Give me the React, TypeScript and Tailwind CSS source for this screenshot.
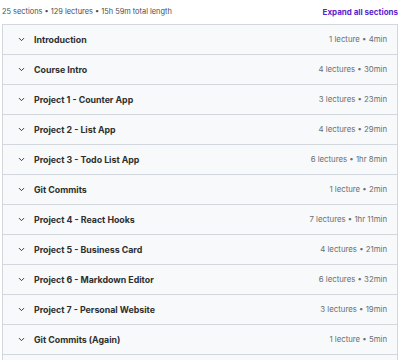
import { ChevronDown } from "lucide-react";

const sections = [
  { title: "Introduction", meta: "1 lecture • 4min" },
  { title: "Course Intro", meta: "4 lectures • 30min" },
  { title: "Project 1 - Counter App", meta: "3 lectures • 23min" },
  { title: "Project 2 - List App", meta: "4 lectures • 29min" },
  { title: "Project 3 - Todo List App", meta: "6 lectures • 1hr 8min" },
  { title: "Git Commits", meta: "1 lecture • 2min" },
  { title: "Project 4 - React Hooks", meta: "7 lectures • 1hr 11min" },
  { title: "Project 5 - Business Card", meta: "4 lectures • 21min" },
  { title: "Project 6 - Markdown Editor", meta: "6 lectures • 32min" },
  { title: "Project 7 - Personal Website", meta: "3 lectures • 19min" },
  { title: "Git Commits (Again)", meta: "1 lecture • 5min" },
];

export default function App() {
  return (
    <div className="w-[400px] h-[360px] overflow-hidden bg-white px-[2px] text-[#2d2f31] font-['Inter',sans-serif]">
      <div className="flex h-6 items-center justify-between">
        <span className="text-[7.4px] text-[#4a4d50]">
          25 sections • 129 lectures • 15h 59m total length
        </span>
        <button className="text-[8px] font-bold text-[#5624d0]">Expand all sections</button>
      </div>
      <div className="border border-[#d1d7dc]">
        {sections.map((s, i) => (
          <div
            key={i}
            className="flex h-[30px] items-center justify-between border-b border-[#d1d7dc] bg-[#f7f9fa] pl-[14px] pr-[10px]"
          >
            <div className="flex items-center gap-[8px]">
              <ChevronDown className="h-[9px] w-[9px] text-[#2d2f31]" strokeWidth={2.5} />
              <span className="text-[8.8px] font-bold">{s.title}</span>
            </div>
            <span className="text-[7.8px] text-[#6a6f73]">{s.meta}</span>
          </div>
        ))}
        <div className="h-[30px] bg-[#f7f9fa]" />
      </div>
    </div>
  );
}
